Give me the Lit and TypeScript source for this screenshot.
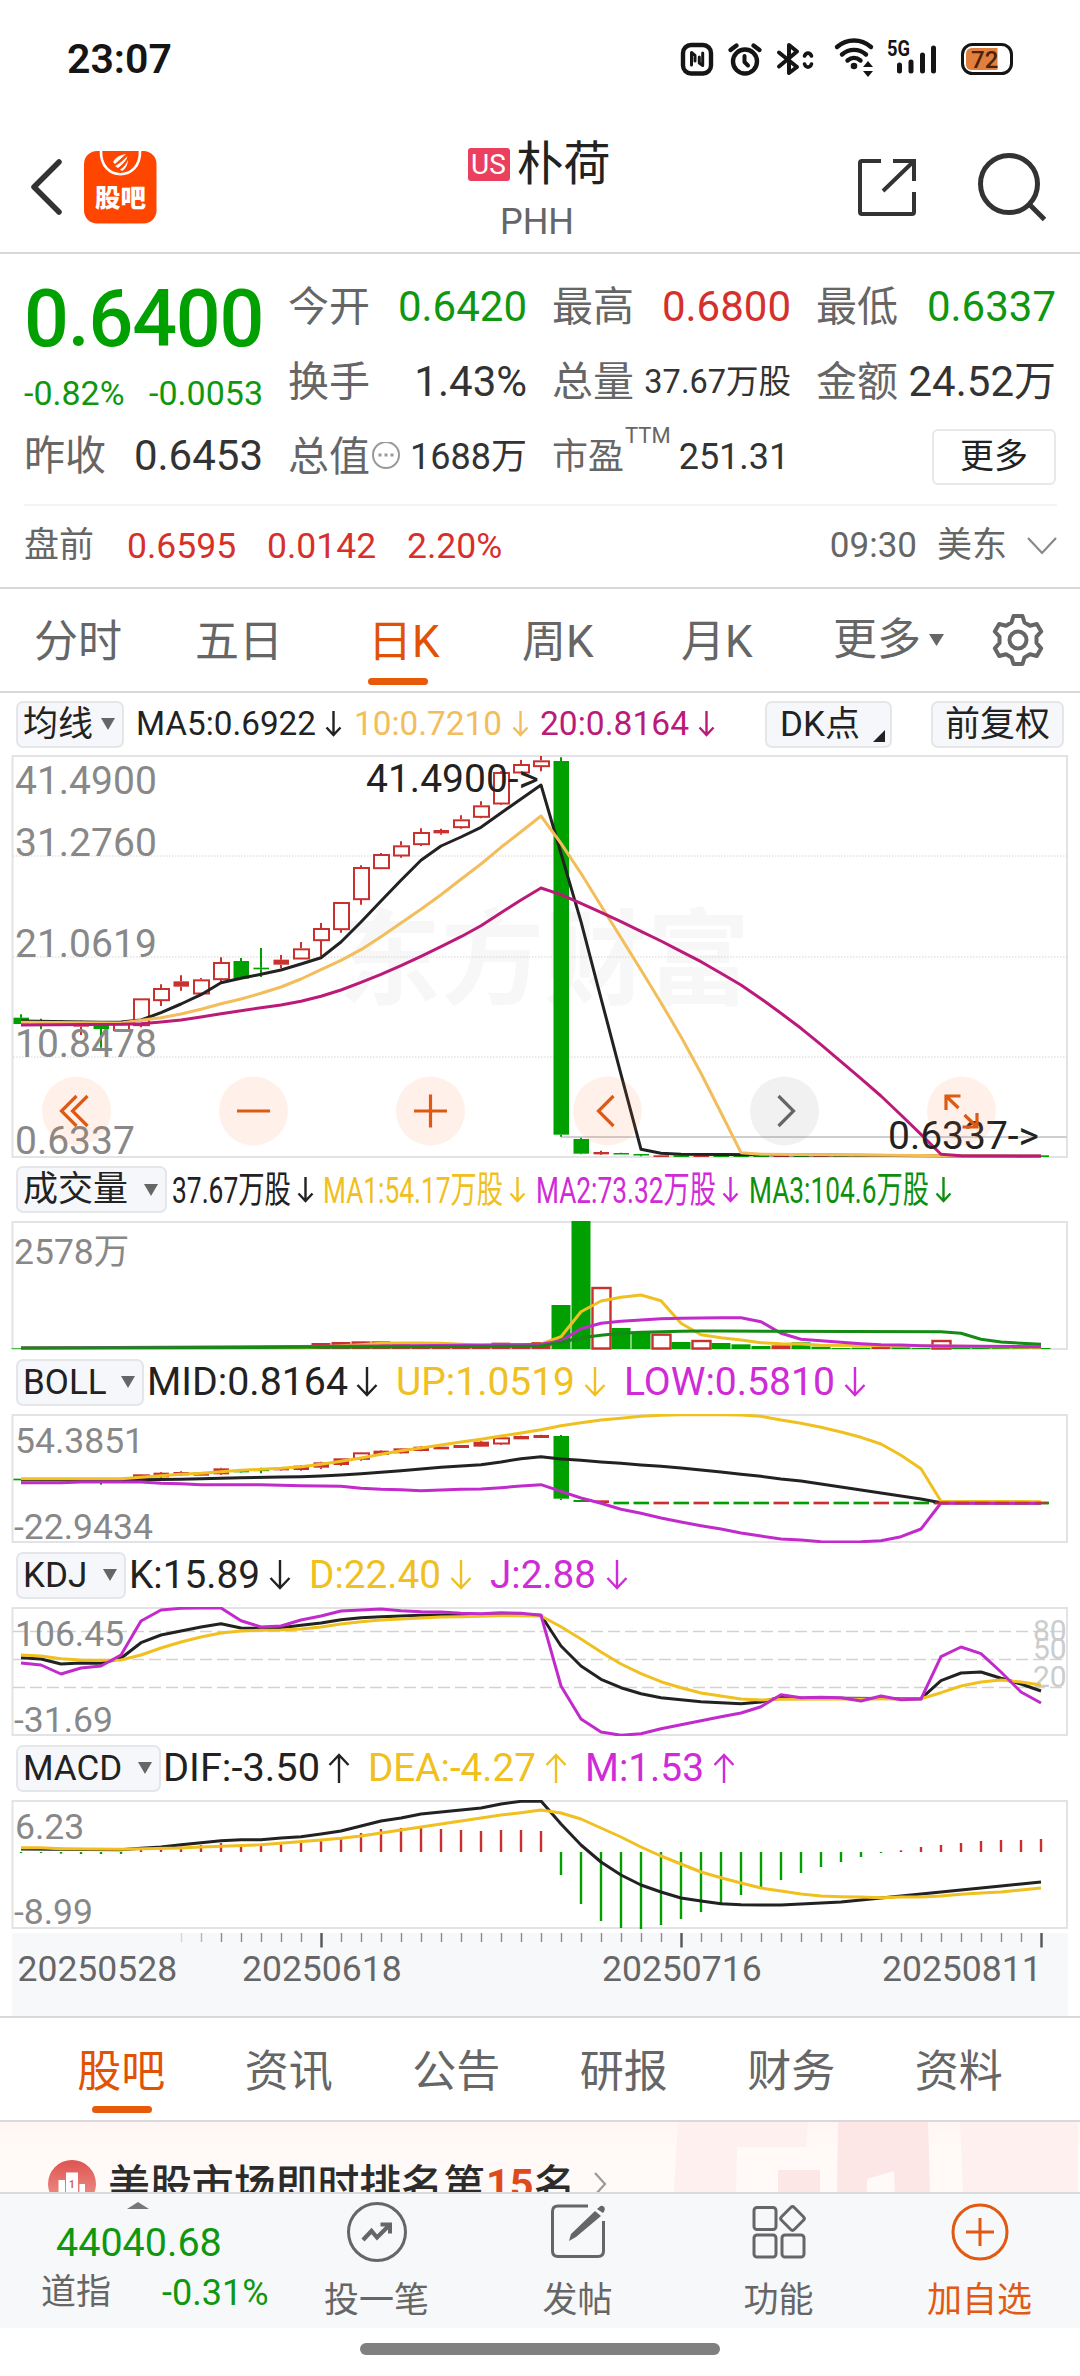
import { LitElement, html, svg, css, TemplateResult } from "lit";
import { customElement, property } from "lit/decorators.js";

const GREEN = "#00a000";
const RED = "#c8312e";
const DARK = "#222222";
const GOLD = "#f0c020";
const SAND = "#f2bd5a";
const PURPLE = "#c22bcb";
const MAGENTA = "#bb1a78";

const xOf = (i: number) => 21 + 20 * i;

/* "i:v" sets the slot index, a bare "v" takes the next slot. Values are thirds of a pixel. */
const parse = (src: string, offset: number): [number, number][] => {
  let i = -1;
  return src.trim().split(/\s+/).map((tok) => {
    const [a, b] = tok.split(":");
    i = b === undefined ? i + 1 : Number(a);
    return [i, Number(b === undefined ? a : b) / 3 + offset];
  });
};

const line = (src: string, offset: number, color: string, w = 3) => svg`
  <polyline fill="none" stroke=${color} stroke-width=${w} stroke-linejoin="round"
    points=${parse(src, offset).map(([i, y]) => `${xOf(i)},${y.toFixed(1)}`).join(" ")}></polyline>`;

/* kind: g = falling, r = rising hollow, f = rising solid */
type Candle = [number, string, number, number, number, number];
const candle = ([i, kind, top, bottom, hi, lo]: Candle, o: number) => {
  const y = (v: number) => v / 3 + o;
  const x = xOf(i);
  const h = Math.max((bottom - top) / 3, 1.5);
  const color = kind === "g" ? GREEN : RED;
  const hollow = kind === "r" && h > 4;
  return svg`
    <path d="M${x} ${y(hi)}V${y(top)}M${x} ${y(bottom)}V${y(lo)}" stroke=${color} stroke-width="2"></path>
    ${hollow
      ? svg`<rect x=${x - 7} y=${y(top) + 1} width="15" height=${h - 1.5} fill="#fff" stroke=${color} stroke-width="2"></rect>`
      : svg`<rect x=${x - 7.5} y=${y(top)} width="15.5" height=${h} fill=${color}></rect>`}`;
};

const flatTail = (from: number, top: number, bottom: number): Candle[] => {
  const rising = [29, 32, 34, 38, 40, 43, 46];
  return Array.from({ length: 52 - from }, (_, k) => {
    const i = from + k;
    return [i, rising.includes(i) ? "f" : "g", top, bottom, top, bottom] as Candle;
  });
};

const MAIN: Candle[] = [
  [0, "g", 833, 852, 823, 852], [1, "g", 847, 852, 836, 868], [2, "g", 847, 850, 840, 852],
  [3, "f", 855, 860, 842, 885], [4, "g", 855, 867, 850, 923], [5, "r", 850, 872, 848, 872],
  [6, "r", 775, 857, 775, 862], [7, "r", 744, 782, 733, 798], [8, "f", 724, 740, 706, 752],
  [9, "r", 718, 762, 714, 764], [10, "r", 666, 719, 652, 725], [11, "g", 663, 716, 654, 716],
  [12, "g", 683, 688, 624, 711], [13, "f", 659, 674, 645, 685], [14, "r", 625, 657, 606, 657],
  [15, "r", 564, 602, 549, 648], [16, "r", 486, 569, 486, 578], [17, "r", 381, 479, 376, 494],
  [18, "r", 342, 386, 339, 386], [19, "r", 316, 348, 304, 353], [20, "r", 276, 314, 265, 318],
  [21, "f", 270, 280, 266, 284], [22, "r", 238, 263, 226, 266], [23, "r", 196, 232, 184, 235],
  [24, "r", 96, 192, 94, 194], [25, "r", 72, 99, 60, 99], [26, "r", 61, 80, 48, 94],
  [27, "g", 63, 1184, 52, 1190], [28, "g", 1197, 1241, 1193, 1243], [29, "f", 1236, 1243, 1232, 1245],
  [30, "g", 1239, 1243, 1238, 1243], [31, "g", 1242, 1246, 1242, 1249], ...flatTail(32, 1246, 1251),
];

const BOLL: Candle[] = [
  [0, "g", 386, 391, 386, 391], [1, "g", 387, 392, 385, 394], [2, "g", 387, 391, 385, 393],
  [3, "f", 388, 394, 386, 398], [4, "g", 390, 394, 388, 404], [5, "f", 388, 394, 388, 396],
  [6, "r", 373, 388, 372, 390], [7, "f", 368, 382, 366, 384], [8, "f", 366, 376, 364, 378],
  [9, "f", 368, 377, 366, 378], [10, "f", 355, 373, 353, 375], [11, "g", 361, 367, 359, 368],
  [12, "g", 359, 363, 353, 370], [13, "f", 355, 361, 353, 362], [14, "f", 347, 360, 345, 362],
  [15, "f", 337, 353, 335, 357], [16, "f", 325, 345, 324, 347], [17, "r", 307, 328, 306, 332],
  [18, "f", 302, 315, 301, 316], [19, "f", 295, 310, 294, 311], [20, "f", 290, 303, 288, 304],
  [21, "f", 290, 298, 290, 298], [22, "f", 285, 294, 285, 294], [23, "f", 275, 290, 273, 291],
  [24, "r", 262, 282, 261, 284], [25, "f", 258, 268, 257, 268], [26, "f", 255, 264, 254, 264],
  [27, "g", 258, 446, 255, 450], [28, "g", 450, 456, 450, 456], [29, "f", 451, 459, 451, 460],
  ...flatTail(30, 455, 463),
];

const volumeBars = () => {
  const tops = parse(
    "0:595 595 595 595 595 595 595 595 595 595 595 595 595 595 593 579 576 574 574 582 585 585 583 583 578 580 576 " +
    "465 213 411 534 545 551 576 570 579 583 588 586 577 590 594 593 590 592 594 570 590 590 590 591 594", -71);
  const hollow = [29, 32, 34, 46];
  const solid = [15, 16, 17, 18, 19, 20, 21, 22, 23, 24, 25, 26, 38, 43];
  return tops.map(([i, y]) => {
    const x = xOf(i) - 9.5;
    return hollow.includes(i)
      ? svg`<rect x=${x + 1} y=${y + 1} width="18" height=${126.5 - y} fill="#fff" stroke=${RED} stroke-width="2.4"></rect>`
      : svg`<rect x=${x} y=${y} width="19" height=${128 - y} fill=${solid.includes(i) ? RED : GREEN}></rect>`;
  });
};

const macdBars = () =>
  parse(
    "0:339 339 341 342 342 342 328 325 320 315 309 314 315 313 309 303 291 279 267 264 262 267 270 273 270 270 273 " +
    "405 492 543 564 567 555 537 516 489 465 441 420 399 381 366 351 339 331 321 315 309 303 300 300 297", -60
  ).map(([i, y]) => svg`<path d="M${xOf(i)} 52V${y}" stroke=${y > 52 ? GREEN : RED} stroke-width="2.4"></path>`);

@customElement("trend-arrow")
class TrendArrow extends LitElement {
  @property({ type: Boolean }) up = false;
  @property({ type: Number }) w = 22;
  @property({ type: Number }) h = 30;
  static styles = css`
    :host { display: block; flex: none; }
    svg { display: block; }
    .up { transform: scaleY(-1); }
  `;
  render() {
    const { w, h } = this;
    const m = w / 2;
    return html`<svg class=${this.up ? "up" : ""} width=${w} height=${h} fill="none" stroke="currentColor" stroke-width="2.4">
      <path d="M${m} 0V${h - 2}M1.5 ${h - m - 1}L${m} ${h - 2}L${w - 1.5} ${h - m - 1}"></path></svg>`;
  }
}

@customElement("status-bar")
class StatusBar extends LitElement {
  static styles = css`
    :host { display: flex; justify-content: space-between; height: 118px; }
    .clock { font-size: 41px; font-weight: 600; line-height: 118px; padding-left: 67px; color: #151515; }
    svg { display: block; }
    .net { font: 700 22px Roboto, sans-serif; }
    .level { font: 500 24px Roboto, sans-serif; }
  `;
  render() {
    return html`
      <div class="clock">23:07</div>
      <svg width="420" height="118" viewBox="660 0 420 118" fill="none" stroke="#151515" stroke-width="4.4" stroke-linecap="round" stroke-linejoin="round">
        <rect x="683" y="45" width="28" height="28.500" rx="8"></rect>
        <path d="M691.500 65V52.500L695 55.500V61M702.700 53V65.500L699.300 63V57" stroke-width="3"></path>
        <circle cx="745" cy="61.500" r="12"></circle>
        <path d="M730.500 50L736.500 45.500M753.500 45.500L759.500 50" stroke-width="4.400"></path>
        <path d="M744.500 56V62L748 65.500" stroke-width="4"></path>
        <path d="M779 52.500L797 67L789 73V45L797 51.500L779 66.500" stroke-width="4"></path>
        <path d="M804.500 56C806 52.200 810 52.200 811.500 56M804.500 64C806 68.200 810 68.200 811.500 64" stroke-width="3.600"></path>
        <path d="M837 47C847 38.300 861 38.300 871 47M842 54.500C849 48.300 859 48.300 866 54.500M847.500 60.500C851.500 57.200 856.500 57.200 860.500 60.500" stroke-width="4.400"></path>
        <circle cx="854" cy="66" r="3.300" fill="#151515" stroke="none"></circle>
        <path d="M868 61L873 67H863ZM868 77L863 71H873Z" fill="#151515" stroke="none"></path>
        <text class="net" x="887" y="56" fill="#151515" stroke="none" textLength="23" lengthAdjust="spacingAndGlyphs">5G</text>
        <path d="M899.500 65V71M911 62V71M922.500 55V71M933.500 48V71" stroke-width="5"></path>
        <rect x="962.500" y="44.500" width="49" height="29" rx="10" stroke-width="3"></rect>
        <path d="M972 48H997.500V70H972Q966 70 966 64V54Q966 48 972 48Z" fill="#e07f3e" stroke="none"></path>
        <text class="level" x="971" y="68" fill="#4b220b" stroke="none">72</text>
      </svg>`;
  }
}

@customElement("title-bar")
class TitleBar extends LitElement {
  static styles = css`
    :host { display: flex; height: 136px; border-bottom: 2px solid #d9d9db; box-sizing: border-box; justify-content: space-between; }
    svg { display: block; flex: none; }
    .logo { font: 900 25px "Noto Sans CJK SC", sans-serif; }
    .name { display: flex; flex-direction: column; align-items: center; width: 240px; }
    .top { display: flex; align-items: center; gap: 7px; height: 56px; margin: 18px 0 0 4px; font-size: 47px; line-height: 56px; color: #222; }
    .tag { width: 42px; height: 33px; margin-top: 1px; border-radius: 3px; background: #eb3f5e; color: #fff; font-size: 28px; line-height: 34px; text-align: center; }
    .code { font-size: 36px; line-height: 40px; margin-top: 10px; color: #666; }
  `;
  render() {
    return html`
      <svg width="417" height="134" viewBox="0 118 417 134">
        <path d="M59 162L34 187L59 212" fill="none" stroke="#333" stroke-width="5.500" stroke-linecap="round" stroke-linejoin="round"></path>
        <rect x="84" y="151" width="72.500" height="72.500" rx="13" fill="#ff4600"></rect>
        <path d="M101 151C100 182 141 182 140 151" fill="none" stroke="#fff" stroke-width="2.600"></path>
        <path d="M113 162Q117 155 126 154L115 164ZM115 166Q121 163 127.500 156Q127 161 118 168ZM120 169.500Q125 167 128 160Q128 167 122 171Z" fill="#fff"></path>
        <text class="logo" x="95" y="207" fill="#fff" textLength="51" lengthAdjust="spacingAndGlyphs">股吧</text>
      </svg>
      <div class="name">
        <div class="top"><span class="tag">US</span><span>朴荷</span></div>
        <div class="code">PHH</div>
      </div>
      <svg width="423" height="134" viewBox="657 118 423 134" fill="none" stroke="#333" stroke-width="4">
        <path d="M881 161H862Q860 161 860 163V212Q860 214 862 214H912Q914 214 914 212V192"></path>
        <path d="M893 161H914V181M883 191L913 162"></path>
        <circle cx="1009" cy="184" r="28.500" stroke-width="5"></circle>
        <path d="M1029 204L1044.500 219.500" stroke-width="5"></path>
      </svg>`;
  }
}

@customElement("quote-panel")
class QuotePanel extends LitElement {
  static styles = css`
    :host { display: block; height: 335px; box-sizing: border-box; border-bottom: 2px solid #d9d9db; padding: 15px 23px 0 24px; }
    .cols { display: grid; grid-template-columns: repeat(3, 239px) 240px; column-gap: 25px; }
    .cell { display: flex; justify-content: space-between; align-items: center; height: 75px; font-size: 41px; line-height: 48px; color: #333; white-space: nowrap; }
    .label { color: #666; }
    .v { font-size: 42px; }
    .up { color: #d6302c; }
    .down { color: #0f970f; }
    .price { height: 100px; line-height: 100px; font-size: 79px; font-weight: 500; color: #00a000; letter-spacing: -1.2px; }
    .delta { display: flex; justify-content: space-between; height: 49px; line-height: 49px; font-size: 34px; color: #0f970f; }
    .s32 { font-size: 32.500px; }
    .s36 { font-size: 36px; }
    .info { display: flex; align-items: center; }
    .ttm { font-size: 22px; line-height: 22px; align-self: flex-start; margin: 6px 8px 0 1px; color: #666; }
    .pe { justify-content: flex-start; }
    .right { justify-content: flex-end; }
    .more { box-sizing: border-box; width: 124px; height: 56px; border: 2px solid #e6e8ea; border-radius: 6px; font-size: 34px; line-height: 50px; text-align: center; color: #222; }
    .pre { display: flex; align-items: center; border-top: 2px solid #f4f4f5; margin-top: 10px; height: 80px; font-size: 35px; line-height: 40px; color: #666; }
    .pre .n { width: 140px; font-size: 35.5px; }
    .pre .k { width: 103px; }
    .pre .t { margin-left: auto; margin-right: 20px; }
    .pre svg { margin-left: 20px; }
  `;
  render() {
    return html`
      <div class="cols">
        <div>
          <div class="price">0.6400</div>
          <div class="delta"><span>-0.82%</span><span>-0.0053</span></div>
          <div class="cell"><span class="label">昨收</span><span class="v">0.6453</span></div>
        </div>
        <div>
          <div class="cell"><span class="label">今开</span><span class="v down">0.6420</span></div>
          <div class="cell"><span class="label">换手</span><span class="v">1.43%</span></div>
          <div class="cell"><span class="info label">总值<svg width="30" height="30" viewBox="0 0 30 30"><circle cx="16" cy="13" r="13" fill="none" stroke="#999" stroke-width="2"></circle><path d="M8.500 13h3M14.500 13h3M20.500 13h3" stroke="#999" stroke-width="3"></path></svg></span><span class="s36">1688万</span></div>
        </div>
        <div>
          <div class="cell"><span class="label">最高</span><span class="v up">0.6800</span></div>
          <div class="cell"><span class="label">总量</span><span class="s32">37.67万股</span></div>
          <div class="cell pe s36"><span class="label s36">市盈</span><span class="ttm">TTM</span><span class="s36">251.31</span></div>
        </div>
        <div>
          <div class="cell"><span class="label">最低</span><span class="v down">0.6337</span></div>
          <div class="cell"><span class="label">金额</span><span class="v">24.52万</span></div>
          <div class="cell right"><span class="more">更多</span></div>
        </div>
      </div>
      <div class="pre">
        <span class="k">盘前</span><span class="n up">0.6595</span><span class="n up">0.0142</span><span class="n up">2.20%</span>
        <span class="t">09:30</span><span>美东</span>
        <svg width="30" height="18" fill="none" stroke="#888" stroke-width="2.200"><path d="M1 1L15 16L29 1"></path></svg>
      </div>`;
  }
}

@customElement("period-tabs")
class PeriodTabs extends LitElement {
  static styles = css`
    :host { display: grid; grid-template-columns: 161px 160px 161px 160px 160px 168px 110px; height: 104px; box-sizing: border-box; border-bottom: 2px solid #d9d9db; font-size: 44px; line-height: 107px; color: #666; padding-left: 34px; white-space: nowrap; }
    .on { color: #e05206; position: relative; width: 68px; }
    .on::after { content: ""; position: absolute; left: 0; top: 89px; width: 60px; height: 7px; border-radius: 4px; background: #e65a0a; }
    .more { display: flex; align-items: center; gap: 8px; height: 102px; }
    svg { display: block; }
    .i3 { justify-self: start; margin-left: 13px; }
    .i4 { margin-left: 6px; }
    .i5 { margin-left: 5px; }
    .i6 { margin-left: -3px; }
    .set { padding-top: 25px; margin-left: -14px; }
  `;
  render() {
    return html`
      <span>分时</span><span>五日</span><span class="on i3">日K</span><span class="i4">周K</span><span class="i5">月K</span>
      <span class="more i6"><span>更多</span><svg width="15" height="12"><path d="M0 0H15L7.500 12Z" fill="#666"></path></svg></span>
      <svg class="set" width="56" height="52" viewBox="0 0 56 52" fill="none" stroke="#666" stroke-width="4" stroke-linejoin="round">
        <path d="M23.500 2H32.500L34.500 8.500L40 11.700L46.800 10L51.200 17.500L46.500 22.700V29L51.200 34.300L46.800 42L40 40.200L34.500 43.400L32.500 50H23.500L21.500 43.400L16 40.200L9.200 42L4.800 34.300L9.500 29V22.700L4.800 17.500L9.200 10L16 11.700L21.500 8.500Z"></path>
        <circle cx="28" cy="26" r="8.500"></circle>
      </svg>`;
  }
}

interface Reading { text: string; w: number; arrow: number; color: string; gap: number }

@customElement("indicator-row")
class IndicatorRow extends LitElement {
  @property() name = "";
  @property({ type: Number }) box = 128;
  @property({ type: Number }) lead = 5;
  @property({ type: Number }) size = 38.5;
  @property({ type: Boolean }) up = false;
  @property({ attribute: false }) items: Reading[] = [];
  static styles = css`
    :host { display: flex; align-items: center; box-sizing: border-box; padding: 0 16px; }
    .pick { box-sizing: border-box; flex: none; display: flex; align-items: center; justify-content: space-between; height: 47px; padding: 0 7px 0 5px; border: 2px solid #e4e6ea; border-radius: 7px; background: #f6f7fa; color: #222; font-size: 35px; line-height: 43px; white-space: nowrap; }
    .item { display: flex; align-items: center; flex: none; }
    svg { display: block; flex: none; overflow: visible; }
    text { font-family: Roboto, "Noto Sans CJK SC", sans-serif; }
  `;
  render() {
    const small = this.size < 38;
    return html`
      <div class="pick" style="width:${this.box}px;margin-right:${this.lead}px"><span>${this.name}</span><svg width="14" height="12"><path d="M0 0H14L7 12Z" fill="#666"></path></svg></div>
      ${this.items.map((r) => html`
        <div class="item" style="color:${r.color};margin-right:${r.gap}px">
          <svg width=${r.w} height="46"><text x="0" y=${22.500 + this.size * 0.36} font-size=${this.size} fill="currentColor" textLength=${r.w} lengthAdjust="spacingAndGlyphs">${r.text}</text></svg>
          <trend-arrow style="margin-left:${r.arrow}px" ?up=${this.up} .w=${small ? 17 : 22} .h=${small ? 26 : 30}></trend-arrow>
        </div>`)}
      <slot></slot>`;
  }
}

@customElement("chart-stack")
class ChartStack extends LitElement {
  static styles = css`
    :host { display: block; }
    svg { display: block; }
    .first { height: 62px; }
    .r63 { height: 63px; }
    .r64 { height: 64px; }
    .opt { position: relative; box-sizing: border-box; height: 47px; border: 2px solid #e4e6ea; border-radius: 7px; background: #f6f7fa; color: #222; font-size: 35px; line-height: 44px; white-space: nowrap; }
    .dk { width: 127px; padding-left: 13px; margin-left: auto; margin-right: 39px; }
    .dk::after { content: ""; position: absolute; right: 5px; bottom: 4px; border-left: 12px solid transparent; border-bottom: 12px solid #222; }
    .adj { width: 133px; text-align: center; }
    text { font-family: Roboto, "Noto Sans CJK SC", sans-serif; font-size: 35.5px; fill: #888; }
    .big { font-size: 39px; }
    .note { font-size: 39px; fill: #222; }
    .mark { font-family: "Noto Sans CJK SC", sans-serif; font-weight: 700; font-size: 104px; fill: #f7f7f7; }
    .lvl { font-size: 30px; fill: #ccc; }
    .axis { margin-top: 4px; }
    .date { fill: #666; }
  `;
  private frame(h: number, content: TemplateResult | TemplateResult[] | unknown) {
    return html`<svg width="1080" height=${h}>
      <rect x="12.500" y="1" width="1054.500" height=${h - 2} fill="none" stroke="#e3e3e5" stroke-width="2"></rect>${content}</svg>`;
  }
  private pad(cx: number, icon: string, gray = false) {
    return svg`<g transform="translate(${cx} 356)"><circle r="34.500" fill=${gray ? "#777" : "#ff7430"} fill-opacity=".1"></circle>
      <path d=${icon} fill="none" stroke=${gray ? "#666" : "#dc5a14"} stroke-width="3.200"></path></g>`;
  }
  private main() {
    const o = -15;
    return this.frame(403, svg`
      <text class="mark" x="338" y="242" textLength="412" lengthAdjust="spacingAndGlyphs">东方财富</text>
      ${[101, 202, 302].map((y) => svg`<path d="M13 ${y}H1067" stroke="#d4d4d4" stroke-width="1" stroke-dasharray="1.500 1.500"></path>`)}
      <path d="M561 382H1067" stroke="#cfcfd3" stroke-width="2"></path>
      ${MAIN.map((c) => candle(c, o))}
      ${line("0:843 4:847 846 840 818 792 764 728 715 703 690 672 653 606 546 483 421 361 318 291 262 219 177 135 340 545 775 1003 1228 1240 1243 51:1249", o, DARK)}
      ${line("0:847 5:849 841 833 822 808 791 777 760 741 717 689 661 629 590 549 508 464 418 372 322 275 228 310 400 497 593 690 788 890 1000 1118 1238 1243 51:1249", o, SAND)}
      ${line("0:855 5:853 851 846 840 831 821 812 803 795 784 769 750 727 703 677 649 620 590 557 518 480 444 464 490 517 545 574 603 634 665 700 735 776 820 865 914 965 1016 1068 1125 1183 1243 1247 51:1248", o, MAGENTA)}
      <text class="big" x="15" y="39">41.4900</text><text class="big" x="15" y="101">31.2760</text>
      <text class="big" x="15" y="202">21.0619</text><text class="big" x="15" y="302">10.8478</text>
      <text class="big" x="15" y="399">0.6337</text>
      <text class="note" x="366" y="37" textLength="173" lengthAdjust="spacingAndGlyphs">41.4900-&gt;</text>
      <text class="note" x="888" y="394" textLength="151" lengthAdjust="spacingAndGlyphs">0.6337-&gt;</text>
      ${this.pad(76.5, "M0 -15L-15 0L0 15M11 -15L-4 0L11 15")}
      ${this.pad(253.5, "M-16.500 0H16.500")}
      ${this.pad(430.5, "M-16.500 0H16.500M0 -16.500V16.500")}
      ${this.pad(607.5, "M6 -15L-9 0L6 15")}
      ${this.pad(784.5, "M-6 -15L9 0L-6 15", true)}
      ${this.pad(961.5, "M-15.500 -1V-15H-1M-15 -14.500L-3 -3M15.500 2V16H1M15 15.500L3 4")}
    `);
  }
  private volume() {
    return this.frame(129, svg`
      ${volumeBars()}
      ${line("0:594 14:593 590 587 584 580 579 579 580 583 586 586 584 582 560 485 453 442 435 452 520 554 563 570 578 581 582 586 46:588 51:592", -71, GOLD, 3)}
      ${line("0:594 18:588 25:584 583 573 536 520 514 510 506 505 504 503 503 515 550 568 572 577 581 584 585 587 588 51:590", -71, PURPLE, 3)}
      ${line("0:594 14:592 26:588 577 563 556 550 547 545 544 543 35:543 46:545 550 568 576 580 583", -71, "#158a15", 3)}
      <text x="14" y="43">2578万</text>`);
  }
  private boll() {
    return this.frame(129, svg`
      ${BOLL.map((c) => candle(c, -64))}
      ${line("0:389 5:390 8:388 10:385 11:383 13:381 14:380 378 375 371 367 362 357 352 348 344 336 326 320 327 331 336 340 345 349 354 360 366 373 379 387 393 402 411 420 429 438 447 458 51:459", -64, DARK, 3)}
      ${line("0:386 5:386 382 377 373 370 365 361 358 355 350 343 334 324 313 302 294 285 276 268 258 249 239 227 218 210 205 199 196 194 194 194 195 199 210 220 232 246 262 282 316 356 454 51:455", -64, GOLD, 3)}
      ${line("0:398 2:398 396 6:396 400 401 404 12:404 14:407 16:409 415 418 419 422 420 418 417 413 408 404 424 444 460 478 490 504 516 527 537 549 558 567 570 575 576 575 572 560 537 459 51:460", -64, PURPLE, 3)}
      <path d="M935 89H1048" stroke=${RED} stroke-width="2.400" stroke-dasharray="14 6" opacity=".8"></path>
      <text x="15" y="39">54.3851</text><text x="14" y="125">-22.9434</text>`);
  }
  private kdj() {
    return this.frame(129, svg`
      ${[24.5, 52.5, 80.5].map((y) => svg`<path d="M13 ${y}H1067" stroke="#d2d2d4" stroke-width="1.600" stroke-dasharray="12 5"></path>`)}
      <text class="lvl" x="1033" y="34">80</text><text class="lvl" x="1033" y="52">50</text><text class="lvl" x="1033" y="80">20</text>
      ${line("0:323 327 342 339 340 325 278 255 243 231 221 234 235 233 226 219 209 203 200 198 196 195 195 24:193 26:196 288 348 388 413 431 443 449 455 458 461 456 441 444 45:446 392 369 366 385 402 423", -57, DARK, 3)}
      ${line("0:315 318 326 330 331 330 315 294 276 261 249 243 241 240 237 231 222 215 210 207 204 201 200 199 197 26:198 230 267 306 342 371 395 413 429 438 447 450 448 45:446 428 408 396 390 396 405", -57, GOLD, 3)}
      ${line("0:339 345 372 354 348 315 213 180 175 174 174 212 231 228 210 198 183 180 177 182 185 186 190 191 188 190 196 408 507 546 556 551 536 524 512 500 489 470 434 443 442 443 453 438 449 447 320 291 311 366 426 459", -57, PURPLE, 3)}
      <text x="15" y="39">106.45</text><text x="14" y="125">-31.69</text>`);
  }
  private macd() {
    return this.frame(129, svg`
      ${macdBars()}
      ${line("0:327 5:329 325 321 314 308 302 299 299 294 290 282 273 258 243 234 222 216 210 204 192 184 183 252 315 366 405 435 456 474 483 491 494 495 495 492 489 486 480 474 468 462 456 450 444 438 432 426", -60, DARK, 3)}
      ${line("0:323 323 326 5:328 8:324 321 12:314 15:300 295 288 279 270 261 252 243 234 225 218 210 219 237 264 291 321 348 372 396 413 429 444 453 462 468 470 471 473 471 471 468 463 459 456 450 444", -60, GOLD, 3)}
      <text x="15" y="39">6.23</text><text x="14" y="124">-8.99</text>`);
  }
  private dates() {
    const major = [15, 33, 51];
    return html`<svg class="axis" width="1080" height="83">
      <rect x="12" width="1056" height="83" fill="#f7f8fa"></rect>
      ${Array.from({ length: 44 }, (_, k) => k + 8).map((i) => {
        const big = major.includes(i);
        return svg`<path d="M${xOf(i) + 0.5} 0V${big ? 14.5 : 9}" stroke=${big ? "#555" : "#8a8a8a"} stroke-width=${big ? 2.4 : 1.4} opacity=${i < 10 ? 0.3 + (i - 8) * 0.3 : 1}></path>`;
      })}
      ${([[17.5, "20250528"], [242, "20250618"], [602, "20250716"], [882, "20250811"]] as [number, string][]).map(
        ([x, s]) => svg`<text class="date" x=${x} y="48">${s}</text>`)}
    </svg>`;
  }
  render() {
    return html`
      <indicator-row class="first" name="均线" .box=${108} .lead=${12} .size=${33} .items=${[
        { text: "MA5:0.6922", w: 180, arrow: 9, color: DARK, gap: 12 },
        { text: "10:0.7210", w: 148, arrow: 10, color: SAND, gap: 11 },
        { text: "20:0.8164", w: 149, arrow: 9, color: MAGENTA, gap: 0 },
      ]}><div class="opt dk">DK点</div><div class="opt adj">前复权</div></indicator-row>
      ${this.main()}
      <indicator-row class="r63" name="成交量" .box=${151} .lead=${5} .size=${37} .items=${[
        { text: "37.67万股", w: 119, arrow: 6, color: DARK, gap: 9 },
        { text: "MA1:54.17万股", w: 180, arrow: 6, color: GOLD, gap: 10 },
        { text: "MA2:73.32万股", w: 180, arrow: 6, color: "#cf2bd6", gap: 10 },
        { text: "MA3:104.6万股", w: 180, arrow: 6, color: "#0f8f0f", gap: 0 },
      ]}></indicator-row>
      ${this.volume()}
      <indicator-row class="r64" name="BOLL" .box=${128} .lead=${3} .items=${[
        { text: "MID:0.8164", w: 201, arrow: 8, color: DARK, gap: 18 },
        { text: "UP:1.0519", w: 179, arrow: 9, color: GOLD, gap: 18 },
        { text: "LOW:0.5810", w: 211, arrow: 9, color: "#cf2bd6", gap: 0 },
      ]}></indicator-row>
      ${this.boll()}
      <indicator-row class="r64" name="KDJ" .box=${110} .lead=${3} .items=${[
        { text: "K:15.89", w: 131, arrow: 9, color: DARK, gap: 18 },
        { text: "D:22.40", w: 132, arrow: 9, color: GOLD, gap: 18 },
        { text: "J:2.88", w: 106, arrow: 10, color: "#cf2bd6", gap: 0 },
      ]}></indicator-row>
      ${this.kdj()}
      <indicator-row class="r64" name="MACD" .box=${145} .lead=${2} .up=${true} .items=${[
        { text: "DIF:-3.50", w: 157, arrow: 8, color: DARK, gap: 18 },
        { text: "DEA:-4.27", w: 168, arrow: 9, color: GOLD, gap: 18 },
        { text: "M:1.53", w: 119, arrow: 9, color: "#cf2bd6", gap: 0 },
      ]}></indicator-row>
      ${this.macd()}
      ${this.dates()}`;
  }
}

@customElement("news-tabs")
class NewsTabs extends LitElement {
  static styles = css`
    :host { display: grid; grid-template-columns: repeat(6, 167.5px); justify-content: center; height: 106px; box-sizing: border-box; border-top: 2px solid #d9d9db; border-bottom: 2px solid #d9d9db; font-size: 44px; line-height: 108px; color: #666; text-align: center; }
    .on { color: #e05206; position: relative; }
    .on::after { content: ""; position: absolute; left: 54px; top: 88px; width: 60px; height: 7px; border-radius: 4px; background: #e65a0a; }
  `;
  render() {
    return html`${["股吧", "资讯", "公告", "研报", "财务", "资料"].map((t, i) => html`<span class=${i ? "" : "on"}>${t}</span>`)}`;
  }
}

@customElement("rank-strip")
class RankStrip extends LitElement {
  static styles = css`
    :host { display: block; height: 70px; overflow: hidden; background: linear-gradient(#fff6f4, #fffaf7 40%); }
    svg { display: block; }
    text { font-family: Roboto, "Noto Sans CJK SC", sans-serif; font-weight: 500; font-size: 41.5px; fill: #2c2c2c; }
    .hot { font-weight: 700; fill: #dc4a1e; }
    .one { font-size: 10px; font-weight: 700; fill: #dd5c5c; }
  `;
  render() {
    return html`<svg width="1080" height="70" viewBox="0 2122 1080 70">
      <defs><linearGradient id="medal" x1="0" y1="0" x2="0" y2="1"><stop offset="0" stop-color="#de5450"></stop><stop offset="1" stop-color="#f09c94"></stop></linearGradient></defs>
      <path d="M678 2121H808L806 2147H737L736 2192H674ZM960 2121H1078V2192H963Z" fill="#fdf0ef"></path>
      <path d="M838 2121H928L930 2192H895L894 2171L867 2179V2192H837ZM778 2170H820V2192H778Z" fill="#fce6e6"></path>
      <circle cx="72" cy="2184" r="24" fill="url(#medal)"></circle>
      <path d="M66 2172.500H78V2192H66ZM58.500 2180H65V2192H58.500ZM79.500 2184H85V2192H79.500Z" fill="#fff"></path>
      <text class="one" x="69" y="2188">1</text>
      <text x="108" y="2200" textLength="377" lengthAdjust="spacingAndGlyphs">美股市场即时排名第</text>
      <text class="hot" x="486" y="2198">15</text>
      <text x="534" y="2200">名</text>
      <path d="M595 2173L605 2184L595 2195" fill="none" stroke="#999" stroke-width="2.200"></path>
    </svg>`;
  }
}

@customElement("action-bar")
class ActionBar extends LitElement {
  static styles = css`
    :host { display: grid; grid-template-columns: 276px 201px 201px 201px 201px; height: 136px; box-sizing: border-box; border-top: 2px solid #d9dadc; background: #f7f8fa; }
    .index { display: flex; flex-direction: column; color: #0f970f; }
    .tri { align-self: flex-start; margin: 8px 0 0 127px; border: 11px solid transparent; border-top: 0; border-bottom: 7px solid #77777b; }
    .num { font-size: 39.5px; line-height: 44px; margin: 12px 0 0 56px; }
    .sub { display: flex; gap: 51px; font-size: 35px; line-height: 40px; margin: 8px 0 0 41px; }
    .sub .n { font-size: 36px; }
    .gray { color: #666; }
    .act { display: flex; flex-direction: column; align-items: center; color: #666; font-size: 35px; line-height: 40px; }
    .act svg { display: block; margin: 6px 0 17px; }
    .add { color: #e05a14; }
  `;
  private act(label: string, icon: unknown, cls = "") {
    return html`<div class="act ${cls}"><svg width="64" height="64" viewBox="-32 -32 64 64" fill="none" stroke="currentColor" stroke-width="3">${icon}</svg><span>${label}</span></div>`;
  }
  render() {
    return html`
      <div class="index"><span class="tri"></span><span class="num">44040.68</span>
        <span class="sub"><span class="gray">道指</span><span class="n">-0.31%</span></span></div>
      ${this.act("投一笔", svg`<circle r="28.500"></circle><path d="M-14 8L-5.500 -1L0 5.500L11.500 -6" stroke-width="4.200"></path><path d="M3.500 -7.500H13V1.500" stroke-width="4"></path>`)}
      ${this.act("发帖", svg`<path d="M10 -26H-20Q-25.500 -26 -25.500 -20.500V19Q-25.500 24.500 -20 24.500H20Q25.500 24.500 25.500 19V-11" ></path>
        <path d="M17 -21L23 -16L-2 5L-9 9L-7 2ZM19 -23L22.500 -26Q25 -27 26.500 -24.500Q27.500 -22 25 -19Z" fill="currentColor" stroke="none"></path>`)}
      ${this.act("功能", svg`<rect x="-25" y="-24.500" width="22" height="22" rx="3"></rect><rect x="-25" y="3" width="22" height="22" rx="3"></rect><rect x="3" y="3" width="22" height="22" rx="3"></rect><rect x="4.500" y="-22.500" width="18" height="18" rx="2.500" transform="rotate(45 13.500 -13.500)"></rect>`)}
      ${this.act("加自选", svg`<circle r="27"></circle><path d="M-14 0H14M0 -14V14"></path>`, "add")}`;
  }
}

@customElement("app-root")
class AppRoot extends LitElement {
  static styles = css`
    :host { display: block; width: 1080px; height: 2376px; overflow: hidden; background: #fff; font-family: Roboto, "Noto Sans CJK SC", sans-serif; }
    .home { width: 360px; height: 12px; margin: 15px auto 0; border-radius: 6px; background: #808080; }
  `;
  render() {
    return html`
      <status-bar></status-bar>
      <title-bar></title-bar>
      <quote-panel></quote-panel>
      <period-tabs></period-tabs>
      <chart-stack></chart-stack>
      <news-tabs></news-tabs>
      <rank-strip></rank-strip>
      <action-bar></action-bar>
      <div class="home"></div>`;
  }
}
